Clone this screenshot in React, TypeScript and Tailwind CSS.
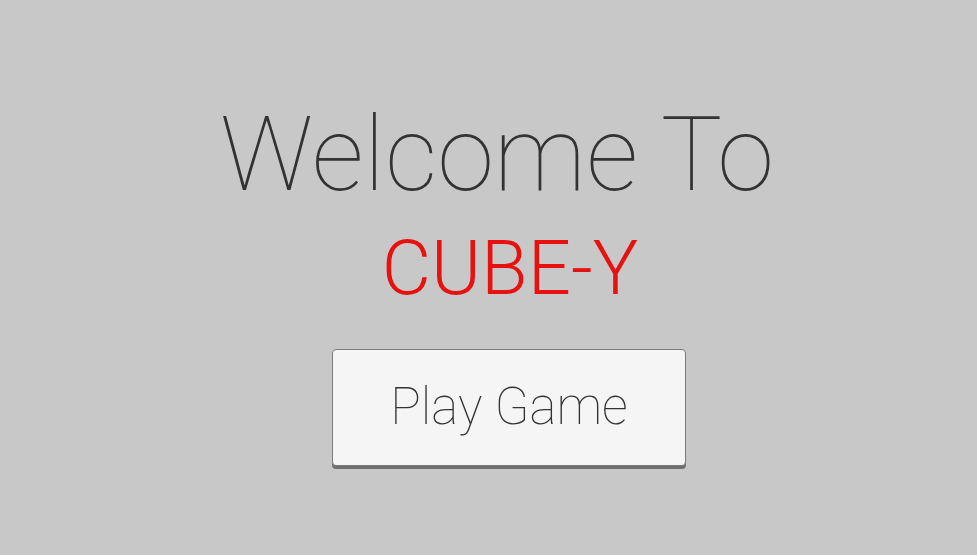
export default function App() {
  return (
    <div
      className="min-h-screen w-full bg-[#c8c8c8] flex flex-col items-center pt-[103px] pl-[41px]"
      style={{ fontFamily: 'Roboto, "Liberation Sans", sans-serif' }}
    >
      <h1 className="text-[103px] leading-none font-thin text-[#333333] -ml-[24px]">Welcome To</h1>
      <h2 className="mt-[24px] text-[76px] leading-none font-light text-[#e5120f] ml-[2px]">CUBE-Y</h2>
      <button className="mt-[43px] w-[354px] h-[117px] bg-[#f5f5f5] border border-[#7a7a7a] rounded-[4px] shadow-[0_3px_0_#6f6f6f] text-[51px] font-thin text-[#333333]">
        Play Game
      </button>
    </div>
  );
}
